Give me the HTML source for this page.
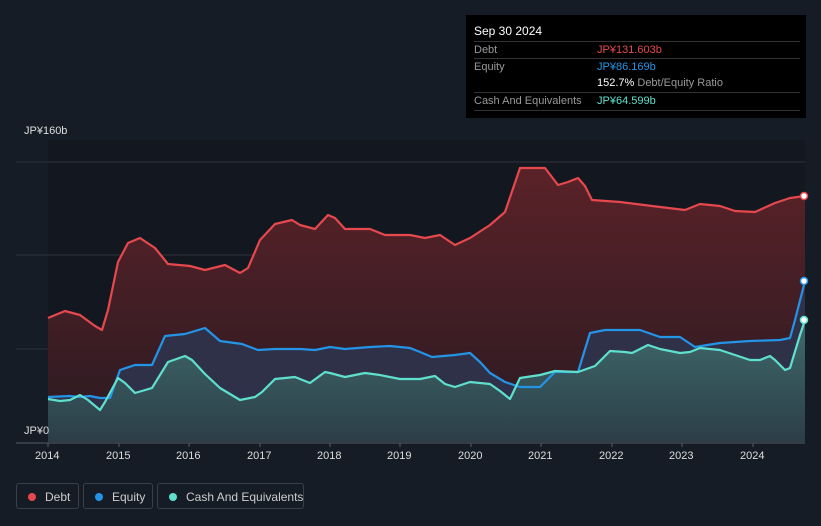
<!DOCTYPE html>
<html><head><meta charset="utf-8"><style>
body{margin:0;width:821px;height:526px;background:#161c26;font-family:"Liberation Sans",sans-serif;overflow:hidden;position:relative}
.tt{position:absolute;left:466px;top:15px;width:340px;height:103px;background:#000;}
.tt .h{position:absolute;left:8px;top:9px;color:#fff;font-size:12px;}
.row{position:absolute;left:8px;width:326px;border-top:1px solid #333;height:17px;font-size:11px;color:#999;line-height:17px;white-space:nowrap}
.row span{position:absolute;left:123px}
.lg{position:absolute;top:483px;height:26px;border:1px solid #3a404a;border-radius:3px;color:#ccc;font-size:12px;line-height:26px;box-sizing:border-box;white-space:nowrap}
.lg i{position:absolute;left:11px;top:9px;width:8px;height:8px;border-radius:50%}
.lg b{font-weight:normal;position:absolute;left:28px}
.ax{position:absolute;top:450px;color:#ddd;font-size:11px}
</style></head><body>
<svg width="821" height="526" style="position:absolute;left:0;top:0">
<defs>
<linearGradient id="dg" x1="0" y1="0" x2="0" y2="1"><stop offset="0" stop-color="#5a2228"/><stop offset="1" stop-color="#2a1a22"/></linearGradient>
<linearGradient id="cg" x1="0" y1="0" x2="0" y2="1"><stop offset="0" stop-color="#3f6a6c"/><stop offset="1" stop-color="#2c3e48"/></linearGradient>
</defs>
<rect x="48" y="140" width="757" height="302" fill="#131820"/>
<line x1="16" y1="162" x2="805" y2="162" stroke="#2c323c"/>
<line x1="16" y1="255" x2="805" y2="255" stroke="#2c323c"/>
<line x1="16" y1="349" x2="805" y2="349" stroke="#2c323c"/>
<path d="M48,318 L65,311 80,315 95,326 102,330 108,310 118,262 128,243 140,238 155,248 168,264 190,266 205,270 225,265 240,273 248,268 260,240 275,224 292,220 300,225 315,229 328,215 335,218 345,229 370,229 385,235 410,235 425,238 440,235 455,245 470,238 490,225 505,212 520,168 545,168 558,185 568,182 578,178 585,186 592,200 620,202 660,207 685,210 700,204 720,206 735,211 755,212 775,203 790,198 805,196 L805,442 L48,442Z" fill="url(#dg)"/>
<path d="M48,397 L70,396 80,397 90,396 100,398 110,398 120,370 135,365 152,365 165,336 185,334 205,328 220,341 242,344 258,350 275,349 300,349 315,350 330,347 345,349 370,347 390,346 410,348 420,352 432,357 455,355 470,353 480,362 490,373 505,382 520,387 540,387 555,372 578,372 590,333 605,330 640,330 660,337 680,337 695,347 720,343 750,341 780,340 790,338 795,320 805,281 L805,442 L48,442Z" fill="#2e3550" opacity="0.85"/>
<path d="M48,399 L60,401 70,400 80,395 88,400 100,410 105,402 118,378 125,383 135,393 152,388 168,362 185,356 192,360 205,374 220,388 240,400 255,397 262,392 275,379 295,377 310,383 325,372 330,373 345,377 365,373 380,375 400,379 420,379 435,376 445,384 455,387 470,382 490,384 500,391 510,399 520,378 540,375 555,371 578,372 595,366 610,351 625,352 632,353 648,345 660,349 680,353 690,352 700,348 720,350 735,355 750,360 760,360 770,356 775,360 785,370 790,368 800,335 805,320 L805,442 L48,442Z" fill="url(#cg)"/>
<path d="M48,318 L65,311 80,315 95,326 102,330 108,310 118,262 128,243 140,238 155,248 168,264 190,266 205,270 225,265 240,273 248,268 260,240 275,224 292,220 300,225 315,229 328,215 335,218 345,229 370,229 385,235 410,235 425,238 440,235 455,245 470,238 490,225 505,212 520,168 545,168 558,185 568,182 578,178 585,186 592,200 620,202 660,207 685,210 700,204 720,206 735,211 755,212 775,203 790,198 805,196" fill="none" stroke="#e5484d" stroke-width="2.2" stroke-linejoin="round"/>
<path d="M48,397 L70,396 80,397 90,396 100,398 110,398 120,370 135,365 152,365 165,336 185,334 205,328 220,341 242,344 258,350 275,349 300,349 315,350 330,347 345,349 370,347 390,346 410,348 420,352 432,357 455,355 470,353 480,362 490,373 505,382 520,387 540,387 555,372 578,372 590,333 605,330 640,330 660,337 680,337 695,347 720,343 750,341 780,340 790,338 795,320 805,281" fill="none" stroke="#2394e6" stroke-width="2.2" stroke-linejoin="round"/>
<path d="M48,399 L60,401 70,400 80,395 88,400 100,410 105,402 118,378 125,383 135,393 152,388 168,362 185,356 192,360 205,374 220,388 240,400 255,397 262,392 275,379 295,377 310,383 325,372 330,373 345,377 365,373 380,375 400,379 420,379 435,376 445,384 455,387 470,382 490,384 500,391 510,399 520,378 540,375 555,371 578,372 595,366 610,351 625,352 632,353 648,345 660,349 680,353 690,352 700,348 720,350 735,355 750,360 760,360 770,356 775,360 785,370 790,368 800,335 805,320" fill="none" stroke="#5fe0cd" stroke-width="2.2" stroke-linejoin="round"/>
<circle cx="804" cy="196" r="3.5" fill="#fff" stroke="#e5484d" stroke-width="1.5"/>
<circle cx="804" cy="281" r="3.5" fill="#fff" stroke="#2394e6" stroke-width="1.5"/>
<circle cx="804" cy="320" r="3.5" fill="#fff" stroke="#5fe0cd" stroke-width="1.5"/>
<line x1="16" y1="443" x2="805" y2="443" stroke="#555b66"/>
<g stroke="#555b66"><line x1="48" y1="443" x2="48" y2="447"/><line x1="119" y1="443" x2="119" y2="447"/><line x1="189" y1="443" x2="189" y2="447"/><line x1="260" y1="443" x2="260" y2="447"/><line x1="330" y1="443" x2="330" y2="447"/><line x1="400" y1="443" x2="400" y2="447"/><line x1="471" y1="443" x2="471" y2="447"/><line x1="541" y1="443" x2="541" y2="447"/><line x1="612" y1="443" x2="612" y2="447"/><line x1="682" y1="443" x2="682" y2="447"/><line x1="753" y1="443" x2="753" y2="447"/></g>
</svg>
<div style="position:absolute;left:24px;top:125px;color:#ddd;font-size:11px">JP¥160b</div>
<div style="position:absolute;left:24px;top:425px;color:#ddd;font-size:11px">JP¥0</div>
<div class="ax" style="left:35px">2014</div><div class="ax" style="left:106px">2015</div><div class="ax" style="left:176px">2016</div><div class="ax" style="left:247px">2017</div><div class="ax" style="left:317px">2018</div><div class="ax" style="left:387px">2019</div><div class="ax" style="left:458px">2020</div><div class="ax" style="left:528px">2021</div><div class="ax" style="left:599px">2022</div><div class="ax" style="left:669px">2023</div><div class="ax" style="left:740px">2024</div>
<div class="tt">
<div class="h">Sep 30 2024</div>
<div class="row" style="top:26px">Debt<span style="color:#e5484d">JP¥131.603b</span></div>
<div class="row" style="top:43px">Equity<span style="color:#2394e6">JP¥86.169b</span></div>
<div class="row" style="top:60px;border-top:none"><span style="color:#fff">152.7% <em style="font-style:normal;color:#999">Debt/Equity Ratio</em></span></div>
<div class="row" style="top:77px">Cash And Equivalents<span style="color:#5fe0cd">JP¥64.599b</span></div>
<div class="row" style="top:95px;height:0"></div>
</div>
<div class="lg" style="left:16px;width:63px"><i style="background:#e5484d"></i><b>Debt</b></div>
<div class="lg" style="left:83px;width:70px"><i style="background:#2394e6"></i><b>Equity</b></div>
<div class="lg" style="left:157px;width:147px"><i style="background:#5fe0cd"></i><b>Cash And Equivalents</b></div>
</body></html>
